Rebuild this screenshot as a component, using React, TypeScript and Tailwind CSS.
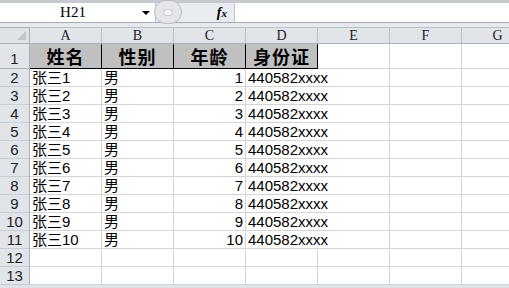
import React from 'react';

const cols = ['A', 'B', 'C', 'D', 'E', 'F', 'G'];
const rows = Array.from({ length: 10 }, (_, i) => ({ name: `张三${i + 1}`, sex: '男', age: i + 1, id: '440582xxxx' }));

const cell = 'h-[18px] border-r border-b border-[#d4d4d4] bg-white overflow-visible whitespace-nowrap leading-[18px]';
const rowHead = 'h-[18px] border-r border-b border-[#a9b0b8] border-b-[#c9ced5] bg-[#e1e5ea] text-center font-["Liberation_Sans",sans-serif] text-[15px] leading-[18px] text-[#222]';

const App: React.FC = () => {
  return (
    <div className="w-[509px] h-[288px] overflow-hidden bg-[#dfe3e8] font-['Liberation_Sans','Noto_Sans_CJK_SC',sans-serif] text-black">
      {/* formula bar */}
      <div className="h-[23px] border-t-[3px] border-[#c6cad0] border-b border-b-[#a5acb5] bg-white flex">
        <div className="w-[155px] flex items-center relative">
          <span className="flex-1 text-center font-['Liberation_Serif',serif] text-[15px] leading-none pl-[4px]">H21</span>
          <span className="w-0 h-0 border-l-[4px] border-r-[4px] border-t-[4px] border-l-transparent border-r-transparent border-t-black mr-[5px]" />
        </div>
        <div className="w-[80px] bg-[#e8ebef] border-l border-r border-[#c0c5cc] flex items-center relative">
          <div className="absolute left-[-2px] top-[-3px] w-[28px] h-[24px] rounded-full bg-[#e4e6ea] border border-[#b8bdc4] flex items-center justify-center">
            <div className="w-[10px] h-[7px] rounded-full bg-[#f4f5f6] border border-[#c6c9ce]" />
          </div>
          <span className="ml-auto mr-[7px] font-['Liberation_Serif',serif] italic font-bold text-[14px] leading-none">f<span className="text-[11px]">x</span></span>
        </div>
        <div className="flex-1" />
      </div>
      <div className="h-[4px] bg-[#e6e9ed]" />
      {/* sheet */}
      <div className="grid grid-cols-[30px_repeat(7,72px)]">
        <div className="h-[17px] border-r border-b border-t border-[#a9b0b8] bg-[#dfe3e8] relative">
          <div className="absolute right-[3px] bottom-[3px] w-0 h-0 border-b-[9px] border-l-[9px] border-b-[#c2c6cc] border-l-transparent" />
        </div>
        {cols.map((c) => (
          <div key={c} className="h-[17px] border-r border-b border-t border-[#b9c0c8] border-b-[#a9b0b8] bg-[#e1e5ea] text-center font-['Liberation_Serif',serif] text-[14px] leading-[16px] text-[#222]">
            {c}
          </div>
        ))}

        {/* row 1 */}
        <div className="h-[25px] border-r border-b border-[#a9b0b8] bg-[#e1e5ea] text-center font-['Liberation_Sans',sans-serif] text-[15px] leading-[30px] text-[#222]">1</div>
        {['姓名', '性别', '年龄', '身份证'].map((h) => (
          <div key={h} className="h-[25px] bg-[#c0c0c0] border-r border-b border-black text-center font-['Noto_Sans_CJK_SC',sans-serif] font-bold text-[18px] leading-[24px] tracking-[1px]">
            {h}
          </div>
        ))}
        {['E', 'F', 'G'].map((c) => (
          <div key={c} className="h-[25px] border-r border-b border-[#d4d4d4] bg-white" />
        ))}

        {rows.map((r, i) => (
          <React.Fragment key={i}>
            <div className={rowHead}>{i + 2}</div>
            <div className={`${cell} pl-[2px] text-[15px]`}>{r.name}</div>
            <div className={`${cell} pl-[2px] text-[15px]`}>{r.sex}</div>
            <div className={`${cell} pr-[2px] text-right text-[15px]`}>{r.age}</div>
            <div className="h-[18px] border-b border-[#d4d4d4] bg-white whitespace-nowrap overflow-visible leading-[18px] pl-[2px] text-[15px] relative z-10">{r.id}</div>
            <div className={cell} />
            <div className={cell} />
            <div className={cell} />
          </React.Fragment>
        ))}

        {[12, 13].map((n) => (
          <React.Fragment key={n}>
            <div className={rowHead}>{n}</div>
            {cols.map((c) => (
              <div key={c} className={cell} />
            ))}
          </React.Fragment>
        ))}
      </div>
    </div>
  );
};

export default App;
